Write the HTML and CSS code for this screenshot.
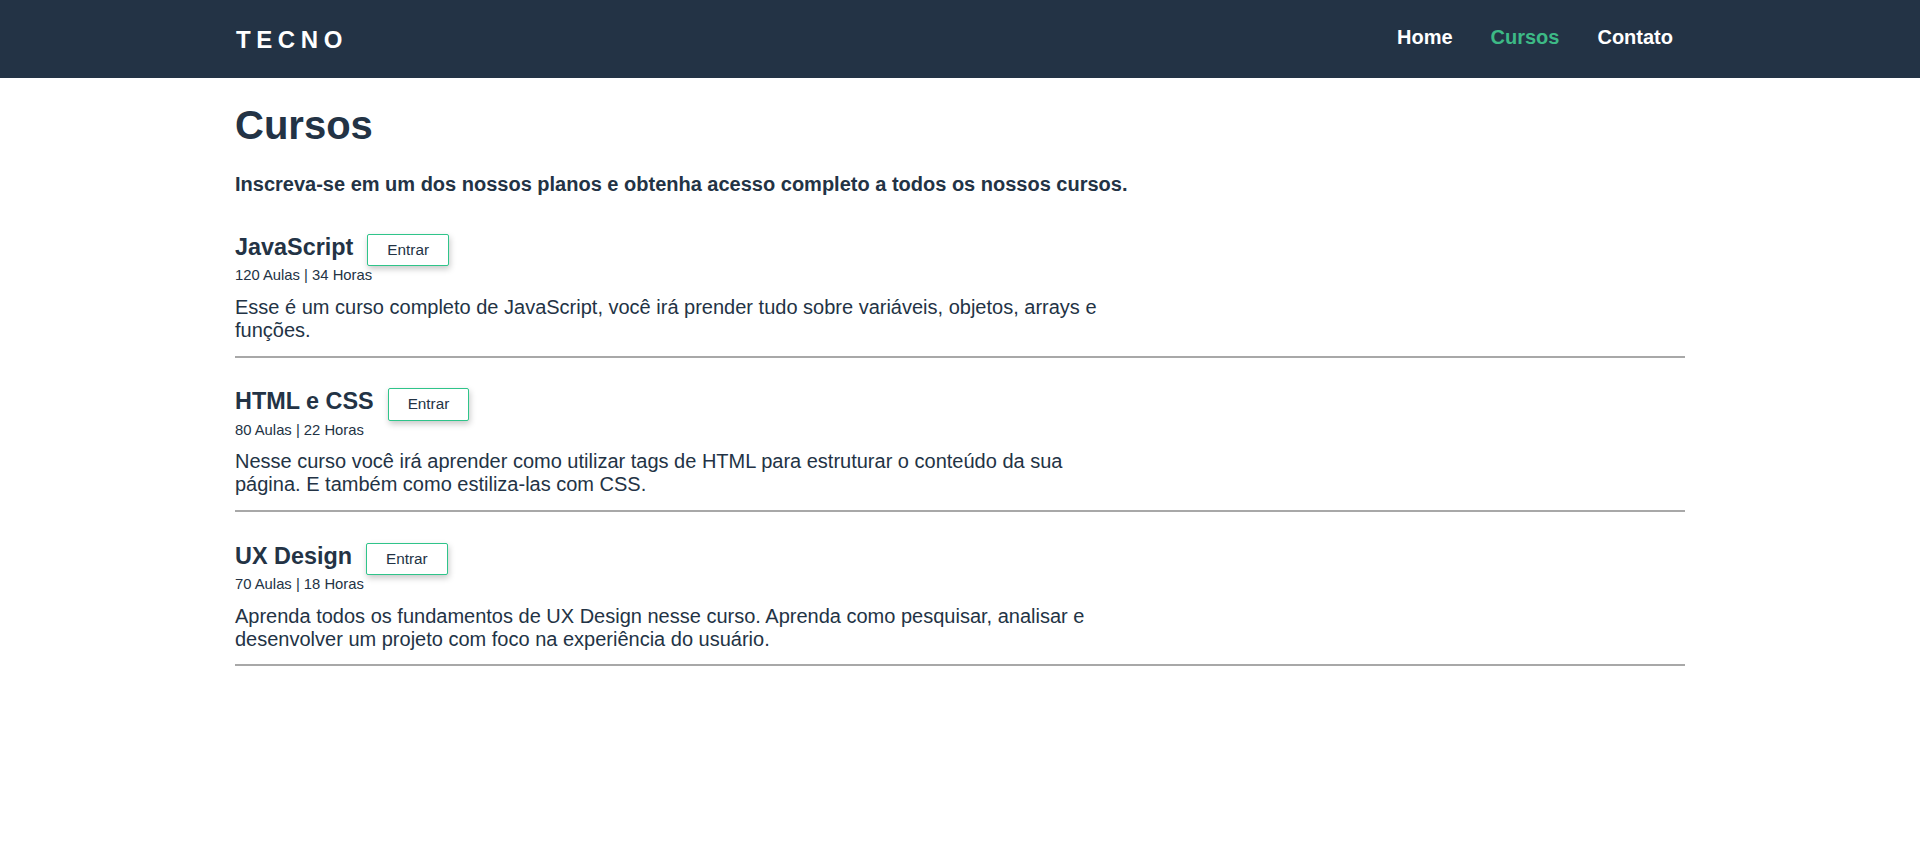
FILE: index.html
```html
<!DOCTYPE html>
<html lang="pt-BR">
<head>
<meta charset="utf-8">
<title>Tecno - Cursos</title>
<link rel="stylesheet" href="styles.css">
</head>
<body>
<header class="topbar">
  <div class="topbar-inner">
    <a class="logo" href="#">TECNO</a>
    <nav class="menu">
      <a href="#" class="menu-link">Home</a>
      <a href="#" class="menu-link active">Cursos</a>
      <a href="#" class="menu-link">Contato</a>
    </nav>
  </div>
</header>
<main class="content">
  <h1 class="page-title">Cursos</h1>
  <p class="lead">Inscreva-se em um dos nossos planos e obtenha acesso completo a todos os nossos cursos.</p>

  <section class="course">
    <div class="course-head">
      <h3 class="course-title">JavaScript</h3>
      <a href="#" class="btn">Entrar</a>
    </div>
    <p class="course-meta">120 Aulas | 34 Horas</p>
    <p class="course-desc">Esse é um curso completo de JavaScript, você irá prender tudo sobre variáveis, objetos, arrays e funções.</p>
  </section>

  <section class="course">
    <div class="course-head">
      <h3 class="course-title">HTML e CSS</h3>
      <a href="#" class="btn">Entrar</a>
    </div>
    <p class="course-meta">80 Aulas | 22 Horas</p>
    <p class="course-desc">Nesse curso você irá aprender como utilizar tags de HTML para estruturar o conteúdo da sua página. E também como estiliza-las com CSS.</p>
  </section>

  <section class="course">
    <div class="course-head">
      <h3 class="course-title">UX Design</h3>
      <a href="#" class="btn">Entrar</a>
    </div>
    <p class="course-meta">70 Aulas | 18 Horas</p>
    <p class="course-desc">Aprenda todos os fundamentos de UX Design nesse curso. Aprenda como pesquisar, analisar e desenvolver um projeto com foco na experiência do usuário.</p>
  </section>
</main>
</body>
</html>
```

FILE: styles.css
```css
* {
  box-sizing: border-box;
}

body {
  margin: 0;
  font-family: "Liberation Sans", Arial, Helvetica, sans-serif;
  font-size: 20px;
  color: #233345;
  background: #ffffff;
}

.topbar {
  background: #233345;
  height: 78px;
}

.topbar-inner {
  max-width: 1450px;
  height: 100%;
  margin: 0 auto;
  padding: 0 12px 0 1px;
  display: flex;
  align-items: center;
  justify-content: space-between;
}

.logo {
  color: #ffffff;
  text-decoration: none;
  font-size: 24px;
  font-weight: bold;
  letter-spacing: 5.6px;
  margin-top: 1px;
}

.menu {
  display: flex;
  gap: 38px;
  margin-top: -3px;
}

.menu-link {
  color: #ffffff;
  text-decoration: none;
  font-size: 20px;
  font-weight: bold;
}

.menu-link.active {
  color: #3dba86;
}

.content {
  max-width: 1450px;
  margin: 0 auto;
}

.page-title {
  font-size: 40px;
  line-height: 46px;
  margin: 24px 0 0;
}

.lead {
  font-size: 20px;
  font-weight: bold;
  line-height: 23px;
  margin: 24.6px 0 38.4px;
}

.course {
  border-bottom: 2px solid #a8a8a8;
  padding-bottom: 13.8px;
  margin-bottom: 30.6px;
}

.course-head {
  display: flex;
  align-items: flex-start;
  gap: 14px;
}

.course-title {
  margin: 0;
  font-size: 23.4px;
  line-height: 27px;
}

.btn {
  display: inline-block;
  height: 32.3px;
  padding: 0 19px;
  line-height: 30.3px;
  border: 1px solid #2fc48a;
  border-radius: 2px;
  background: #ffffff;
  color: #233345;
  text-decoration: none;
  font-size: 15.3px;
  box-shadow: 1px 3px 6px rgba(0, 0, 0, 0.22);
}

.course-meta {
  margin: 1px 0 0;
  font-size: 14.8px;
  line-height: 17.25px;
}

.course-desc {
  margin: 11.4px 0 0;
  max-width: 870px;
  font-size: 20px;
  line-height: 23px;
}
```
